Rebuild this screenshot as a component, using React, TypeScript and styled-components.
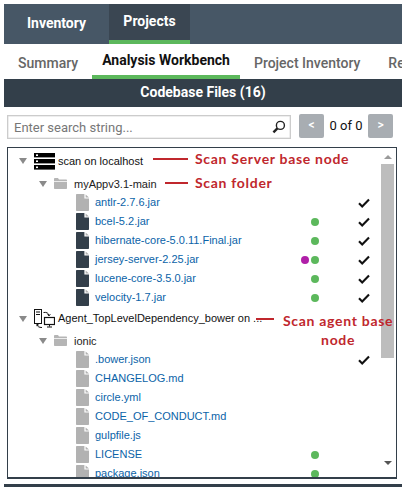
import React from "react";
import styled, { createGlobalStyle } from "styled-components";

const GlobalStyle = createGlobalStyle`
  html, body { margin: 0; padding: 0; background: #fff; overflow: hidden; }
  body { font-family: Roboto, "Liberation Sans", sans-serif; }
`;

interface FileRow {
  name: string;
  dark?: boolean;
  green?: boolean;
  purple?: boolean;
  checked?: boolean;
}

const scanFiles: FileRow[] = [
  { name: "antlr-2.7.6.jar", checked: true },
  { name: "bcel-5.2.jar", dark: true, green: true, checked: true },
  { name: "hibernate-core-5.0.11.Final.jar", dark: true, green: true, checked: true },
  { name: "jersey-server-2.25.jar", dark: true, green: true, purple: true, checked: true },
  { name: "lucene-core-3.5.0.jar", dark: true, green: true, checked: true },
  { name: "velocity-1.7.jar", dark: true, green: true, checked: true },
];

const agentFiles: FileRow[] = [
  { name: ".bower.json", checked: true },
  { name: "CHANGELOG.md" },
  { name: "circle.yml" },
  { name: "CODE_OF_CONDUCT.md" },
  { name: "gulpfile.js" },
  { name: "LICENSE", green: true },
  { name: "package.json", green: true },
];

const ServerIcon = () => (
  <svg width="21" height="17" viewBox="0 0 21 17">
    <rect x="0" y="0" width="21" height="4.4" fill="#000" />
    <rect x="0" y="6" width="21" height="4.4" fill="#000" />
    <rect x="0" y="12" width="21" height="4.6" fill="#000" />
    <rect x="2" y="1.4" width="2" height="1.6" fill="#fff" />
    <rect x="2" y="7.4" width="2" height="1.6" fill="#fff" />
    <rect x="2" y="13.5" width="2" height="1.6" fill="#fff" />
  </svg>
);

const AgentIcon = () => (
  <svg width="21" height="20" viewBox="0 0 21 20" fill="none" stroke="#111" strokeWidth="1">
    <rect x="0.5" y="0.5" width="7" height="14" fill="#fff" />
    <path d="M2 3h4M2 5.5h4" />
    <path d="M9.5 3.5c3-.5 5 .5 5.5 3" />
    <path d="M13.6 5.3l1.4 1.6 1.3-1.7" />
    <rect x="10.5" y="8.5" width="10" height="7" fill="#fff" strokeWidth="1.2" />
    <path d="M15.5 15.5v2M13 18h5" />
    <path d="M3 15.5c.4 2 2 3 5 3" />
    <path d="M3 17.2l0-2 1.8.9" />
  </svg>
);

const FolderIcon = () => (
  <svg width="13" height="11" viewBox="0 0 13 11">
    <path d="M0 1.2C0 .5.4 0 1 0h3l1 1.5h7c.6 0 1 .4 1 1V3H0z" fill="#b5b5b5" />
    <path d="M0 3.8h13v6.2c0 .6-.4 1-1 1H1c-.6 0-1-.4-1-1z" fill="#b5b5b5" />
  </svg>
);

const FileIcon = ({ dark }: { dark?: boolean }) => (
  <svg width="13" height="17" viewBox="0 0 13 17">
    <path
      d="M1 0h7.4v4.6H13V16c0 .6-.4 1-1 1H1c-.6 0-1-.4-1-1V1c0-.6.4-1 1-1z"
      fill={dark ? "#333f4a" : "#b2b2b2"}
    />
    <path d="M9.6 0.4L13 3.6H9.6z" fill="#b2b2b2" />
  </svg>
);

const CheckIcon = () => (
  <svg width="12" height="10" viewBox="0 0 12 10">
    <path d="M1 5.2L4.2 8.4 11 1.4" fill="none" stroke="#111" strokeWidth="2.1" />
  </svg>
);

const SearchIcon = () => (
  <svg width="14" height="14" viewBox="0 0 14 14" fill="none" stroke="#222">
    <circle cx="8.4" cy="5.4" r="4" strokeWidth="1.4" />
    <path d="M5.4 8.4L1.4 12.4" strokeWidth="2.4" />
  </svg>
);

const Files = ({ rows }: { rows: FileRow[] }) => (
  <>
    {rows.map((row) => (
      <Row key={row.name}>
        <FileIndent>
          <FileIcon dark={row.dark} />
        </FileIndent>
        <FileName>{row.name}</FileName>
        <Dots>
          {row.purple && <Dot $color="#b01fa8" />}
          {row.green && <Dot $color="#5cb85c" />}
        </Dots>
        <Check>{row.checked && <CheckIcon />}</Check>
      </Row>
    ))}
  </>
);

export default function App() {
  return (
    <Page>
      <GlobalStyle />
      <TopNav>
        <TopTab>Inventory</TopTab>
        <TopTab $active>Projects</TopTab>
      </TopNav>
      <SubNav>
        <SubTab>Summary</SubTab>
        <SubTab $active>Analysis Workbench</SubTab>
        <SubTab>Project Inventory</SubTab>
        <SubTab>Re</SubTab>
      </SubNav>
      <TitleBar>Codebase Files (16)</TitleBar>
      <SearchRow>
        <SearchBox>
          <SearchInput placeholder="Enter search string..." />
          <SearchIcon />
        </SearchBox>
        <PageButton>&lt;</PageButton>
        <PageCount>0 of 0</PageCount>
        <PageButton>&gt;</PageButton>
      </SearchRow>
      <TreePanel>
        <TreeBody>
          <BaseRow>
            <Twisty />
            <BaseIcon>
              <ServerIcon />
            </BaseIcon>
            <BaseName>scan on localhost</BaseName>
          </BaseRow>
          <FolderRow>
            <Twisty />
            <FolderSlot>
              <FolderIcon />
            </FolderSlot>
            <FolderName>myAppv3.1-main</FolderName>
          </FolderRow>
          <Files rows={scanFiles} />
          <AgentRow>
            <Twisty />
            <BaseIcon>
              <AgentIcon />
            </BaseIcon>
            <AgentName>Agent_TopLevelDependency_bower on ...</AgentName>
          </AgentRow>
          <IonicRow>
            <Twisty />
            <FolderSlot>
              <FolderIcon />
            </FolderSlot>
            <FolderName>ionic</FolderName>
          </IonicRow>
          <Files rows={agentFiles} />
        </TreeBody>
        <ScrollTrack>
          <ArrowUp />
          <ScrollThumb />
          <ArrowDown />
        </ScrollTrack>
        <ServerNote>
          <NoteLine $width={35} />
          <NoteText>Scan Server base node</NoteText>
        </ServerNote>
        <FolderNote>
          <NoteLine $width={23} />
          <NoteText>Scan folder</NoteText>
        </FolderNote>
        <AgentNote>
          <AgentLine $width={18} />
          <NoteText>
            Scan agent base
            <br />
            node
          </NoteText>
        </AgentNote>
      </TreePanel>
      <BottomBar />
    </Page>
  );
}

const Page = styled.div`
  width: 398px;
  height: 483px;
  padding: 4px 4px 0;
  position: relative;
  overflow: hidden;
`;

const TopNav = styled.div`
  display: flex;
  height: 40px;
  background: #475766;
`;

const TopTab = styled.div<{ $active?: boolean }>`
  box-sizing: border-box;
  width: ${(p) => (p.$active ? "81px" : "105px")};
  height: 40px;
  padding-top: ${(p) => (p.$active ? "8px" : "10px")};
  text-align: center;
  font-size: 14px;
  font-weight: 700;
  line-height: 18px;
  color: #fff;
  background: ${(p) => (p.$active ? "#3a4652" : "transparent")};
  border-bottom: ${(p) => (p.$active ? "4px solid #5cb85c" : "none")};
`;

const SubNav = styled.div`
  display: flex;
  height: 35px;
  overflow: hidden;
  white-space: nowrap;
`;

const SubTab = styled.div<{ $active?: boolean }>`
  box-sizing: border-box;
  flex: none;
  height: 35px;
  padding: ${(p) => (p.$active ? "7px 10px 0" : "10px 14px 0")};
  font-size: 14px;
  font-weight: ${(p) => (p.$active ? 700 : 500)};
  line-height: 18px;
  color: ${(p) => (p.$active ? "#111" : "#666")};
  border-bottom: ${(p) => (p.$active ? "4px solid #5cb85c" : "none")};
`;

const TitleBar = styled.div`
  height: 28px;
  line-height: 27px;
  text-align: center;
  font-size: 14px;
  font-weight: 700;
  color: #fff;
  background: #333f4a;
`;

const SearchRow = styled.div`
  display: flex;
  align-items: flex-start;
  height: 40px;
  padding: 7px 0 0 3px;
  box-sizing: border-box;
`;

const SearchBox = styled.div`
  box-sizing: border-box;
  display: flex;
  align-items: center;
  width: 284px;
  height: 24px;
  margin: 1px 8px 0 0;
  padding: 0 4px 0 6px;
  border: 1px solid #ccc;
  box-shadow: inset 0 0 0 0.5px #ddd;
`;

const SearchInput = styled.input`
  flex: 1;
  min-width: 0;
  padding: 0;
  border: 0;
  outline: 0;
  font-family: Roboto, "Liberation Sans", sans-serif;
  font-size: 13px;
  color: #666;

  &::placeholder {
    color: #777;
    opacity: 1;
  }
`;

const PageButton = styled.div`
  width: 25px;
  height: 24px;
  line-height: 22px;
  text-align: center;
  border-radius: 2px;
  background: #a8adb2;
  color: #fff;
  font-size: 12px;
  font-weight: 500;
`;

const PageCount = styled.div`
  width: 44px;
  text-align: center;
  font-size: 13px;
  line-height: 23px;
  color: #111;
`;

const TreePanel = styled.div`
  box-sizing: border-box;
  position: relative;
  display: flex;
  width: 390px;
  height: 332px;
  margin-left: 3px;
  border: 1px solid #333f4a;
  border-width: 1px 1px 2px;
  overflow: hidden;
`;

const TreeBody = styled.div`
  flex: 1;
  min-width: 0;
  padding-top: 3px;
`;

const Row = styled.div`
  display: flex;
  align-items: center;
  height: 19px;
  white-space: nowrap;
`;

const BaseRow = styled(Row)`
  height: 20px;
  padding-left: 11px;
`;

const AgentRow = styled(Row)`
  height: 21px;
  margin-top: 1px;
  padding-left: 11px;
`;

const FolderRow = styled(Row)`
  height: 19px;
  margin-top: 3px;
  padding-left: 31px;
`;

const IonicRow = styled(FolderRow)`
  margin-top: 2px;
`;

const Twisty = styled.span`
  flex: none;
  width: 0;
  height: 0;
  margin-right: 7px;
  border-style: solid;
  border-width: 6px 4px 0;
  border-color: #8a8a8a transparent transparent;
`;

const BaseIcon = styled.span`
  display: flex;
  flex: none;
  width: 21px;
  margin-right: 3px;
`;

const BaseName = styled.span`
  font-family: "Liberation Sans", sans-serif;
  font-size: 11px;
  color: #111;
`;

const AgentName = styled(BaseName)`
  padding-bottom: 2px;
`;

const FolderSlot = styled.span`
  display: flex;
  flex: none;
  width: 13px;
  margin-right: 7px;
`;

const FolderName = styled.span`
  font-family: "Liberation Sans", sans-serif;
  font-size: 11px;
  color: #222;
`;

const FileIndent = styled.span`
  display: flex;
  flex: none;
  width: 13px;
  margin: 0 6px 0 68px;
`;

const FileName = styled.span`
  flex: 1;
  padding-bottom: 2px;
  font-family: "Liberation Sans", sans-serif;
  font-size: 11px;
  color: #0b63a8;
`;

const Dots = styled.span`
  display: flex;
  flex: none;
  justify-content: flex-end;
  gap: 2px;
  width: 40px;
  margin-right: 37px;
`;

const Dot = styled.span<{ $color: string }>`
  width: 8px;
  height: 8px;
  border-radius: 50%;
  background: ${(p) => p.$color};
`;

const Check = styled.span`
  display: flex;
  flex: none;
  justify-content: center;
  width: 16px;
  margin-right: 9px;
`;

const ScrollTrack = styled.div`
  display: flex;
  flex: none;
  flex-direction: column;
  align-items: center;
  width: 13px;
  margin-right: 2px;
  padding-top: 7px;
`;

const ScrollThumb = styled.div`
  width: 13px;
  height: 194px;
  margin-top: 5px;
  background: #bdbdbd;
`;

const ArrowUp = styled.span`
  width: 0;
  height: 0;
  border-style: solid;
  border-width: 0 4px 4px;
  border-color: transparent transparent #9a9a9a;
`;

const ArrowDown = styled.span`
  width: 0;
  height: 0;
  margin-top: 103px;
  border-style: solid;
  border-width: 4px 4px 0;
  border-color: #555 transparent transparent;
`;

const Note = styled.div`
  position: absolute;
  display: flex;
  align-items: center;
`;

const ServerNote = styled(Note)`
  top: 1px;
  left: 145px;
`;

const FolderNote = styled(Note)`
  top: 25px;
  left: 157px;
`;

const AgentNote = styled(Note)`
  top: 163px;
  left: 248px;
  align-items: flex-start;
`;

const NoteLine = styled.span<{ $width: number }>`
  flex: none;
  width: ${(p) => p.$width}px;
  height: 2px;
  margin-right: 7px;
  background: #c0272d;
`;

const AgentLine = styled(NoteLine)`
  margin: 7px 9px 0 0;
`;

const NoteText = styled.span`
  font-family: Lato, sans-serif;
  font-size: 14px;
  font-weight: 700;
  letter-spacing: 0.7px;
  line-height: 19px;
  text-align: center;
  color: #c0272d;
  white-space: nowrap;
`;

const BottomBar = styled.div`
  height: 4px;
  margin-top: 5px;
  background: #333f4a;
`;
